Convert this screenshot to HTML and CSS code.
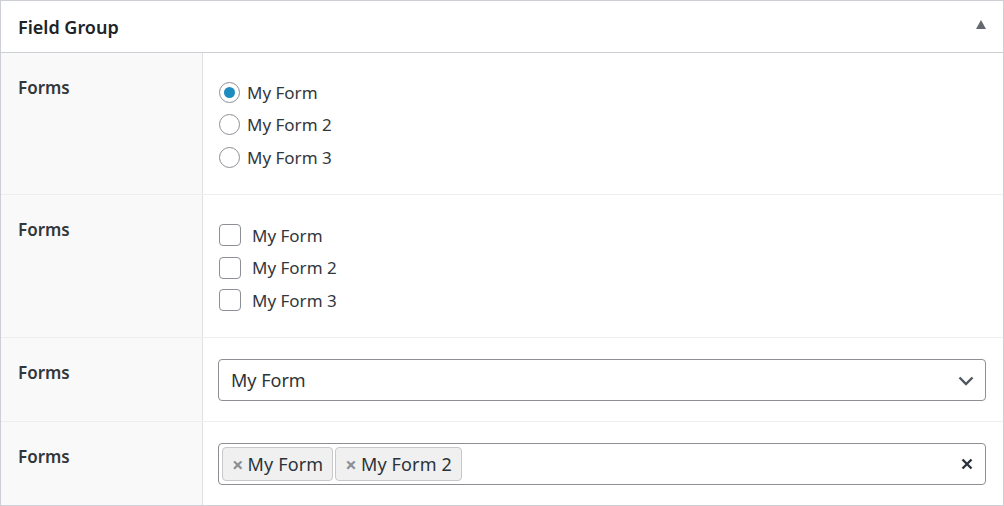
FILE: index.html
```html
<!DOCTYPE html>
<html>
<head>
<meta charset="utf-8">
<link rel="stylesheet" href="styles.css">
</head>
<body>
<div class="postbox">
  <div class="postbox-header">
    <h2 class="hndle">Field Group</h2>
    <span class="toggle"></span>
  </div>
  <div class="fields">
    <div class="field field-1">
      <div class="label">Forms</div>
      <div class="input">
        <ul class="choices">
          <li><span class="radio checked"></span><span class="radio-text">My Form</span></li>
          <li><span class="radio"></span><span class="radio-text">My Form 2</span></li>
          <li><span class="radio"></span><span class="radio-text">My Form 3</span></li>
        </ul>
      </div>
    </div>
    <div class="field field-2">
      <div class="label">Forms</div>
      <div class="input">
        <ul class="choices">
          <li><span class="checkbox"></span><span class="check-text">My Form</span></li>
          <li><span class="checkbox"></span><span class="check-text">My Form 2</span></li>
          <li><span class="checkbox"></span><span class="check-text">My Form 3</span></li>
        </ul>
      </div>
    </div>
    <div class="field field-3">
      <div class="label">Forms</div>
      <div class="input">
        <div class="select">
          <span class="select-value">My Form</span>
          <svg class="chevron" width="16" height="12" viewBox="0 0 16 12"><path d="M1.5 2.5 L8 9 L14.5 2.5" fill="none" stroke="#50575e" stroke-width="2.4"/></svg>
        </div>
      </div>
    </div>
    <div class="field field-last">
      <div class="label">Forms</div>
      <div class="input">
        <div class="select multi">
          <span class="tag"><span class="tag-x">×</span>My Form</span>
          <span class="tag"><span class="tag-x">×</span>My Form 2</span>
          <svg class="clear" width="12" height="12" viewBox="0 0 12 12"><path d="M1.5 1.5 L10.5 10.5 M10.5 1.5 L1.5 10.5" stroke="#2c3338" stroke-width="2.4"/></svg>
        </div>
      </div>
    </div>
  </div>
</div>
</body>
</html>
```
FILE: styles.css
```css
* { box-sizing: border-box; }
html, body { margin: 0; padding: 0; background: #fff; }
body {
  font-family: "Noto Sans", "Open Sans", sans-serif;
  color: #32373c;
  width: 1004px;
  height: 506px;
  overflow: hidden;
}
.postbox {
  width: 1004px;
  border: 1px solid #ccd0d4;
  background: #fff;
}
.postbox-header {
  height: 52px;
  border-bottom: 1px solid #ccd0d4;
  display: flex;
  align-items: center;
  justify-content: space-between;
  padding: 0 17px 0 17px;
}
.hndle {
  margin: 0;
  font-size: 18px;
  font-weight: 600;
  color: #1d2327;
  letter-spacing: 0;
  padding-top: 1px;
}
.toggle {
  width: 0; height: 0;
  border-left: 5.5px solid transparent;
  border-right: 5.5px solid transparent;
  border-bottom: 9px solid #646970;
  margin-top: -4px;
}
.field {
  display: flex;
  border-bottom: 1px solid #eeeeee;
}
.field-1 { height: 142px; }
.field-2 { height: 143px; }
.field-3 { height: 84px; }
.field-last { border-bottom: none; height: 83px; }
.label {
  width: 202px;
  flex: none;
  background: #f9f9f9;
  border-right: 1px solid #e1e1e1;
  padding: 23px 17px 0;
  font-size: 17px;
  font-weight: 600;
  color: #32373c;
}
.input {
  flex: 1;
  padding: 21px 17px 0 15px;
}
.field-1 .input { padding-top: 23px; }
.field-2 .input { padding-top: 24px; }
.choices {
  list-style: none;
  margin: 0;
  padding: 0;
}
.choices li {
  height: 32.5px;
  display: flex;
  align-items: center;
  font-size: 17px;
  color: #32373c;
}
.radio {
  width: 21px;
  height: 21px;
  border: 1px solid #8c8f94;
  border-radius: 50%;
  flex: none;
  margin: 0 7px 0 1px;
  display: flex;
  align-items: center;
  justify-content: center;
  background: #fff;
}
.radio.checked::after {
  content: "";
  width: 11px;
  height: 11px;
  border-radius: 50%;
  background: #1e8cbe;
}
.checkbox {
  width: 22px;
  height: 22px;
  border: 1px solid #8c8f94;
  border-radius: 4px;
  flex: none;
  margin: 0 11px 0 1px;
  background: #fff;
}
.select {
  height: 42px;
  border: 1px solid #8c8f94;
  border-radius: 4px;
  display: flex;
  align-items: center;
  padding: 0 11px 0 12px;
  font-size: 18px;
  color: #2c3338;
  background: #fff;
}
.select-value { flex: 1; }
.chevron { flex: none; margin-top: 1px; }
.multi { padding: 0 12px 0 3px; gap: 2px; }
.tag {
  height: 34px;
  display: flex;
  align-items: center;
  background: #f0f0f0;
  border: 1px solid #c8c8c8;
  border-radius: 4px;
  padding: 0 9px 0 9px;
  font-size: 18px;
  color: #2c3338;
  letter-spacing: 0.15px;
}
.tag-x {
  color: #8c8f94;
  font-weight: 700;
  font-size: 20px;
  margin-right: 4px;
}
.clear {
  margin-left: auto;
  flex: none;
}
```
